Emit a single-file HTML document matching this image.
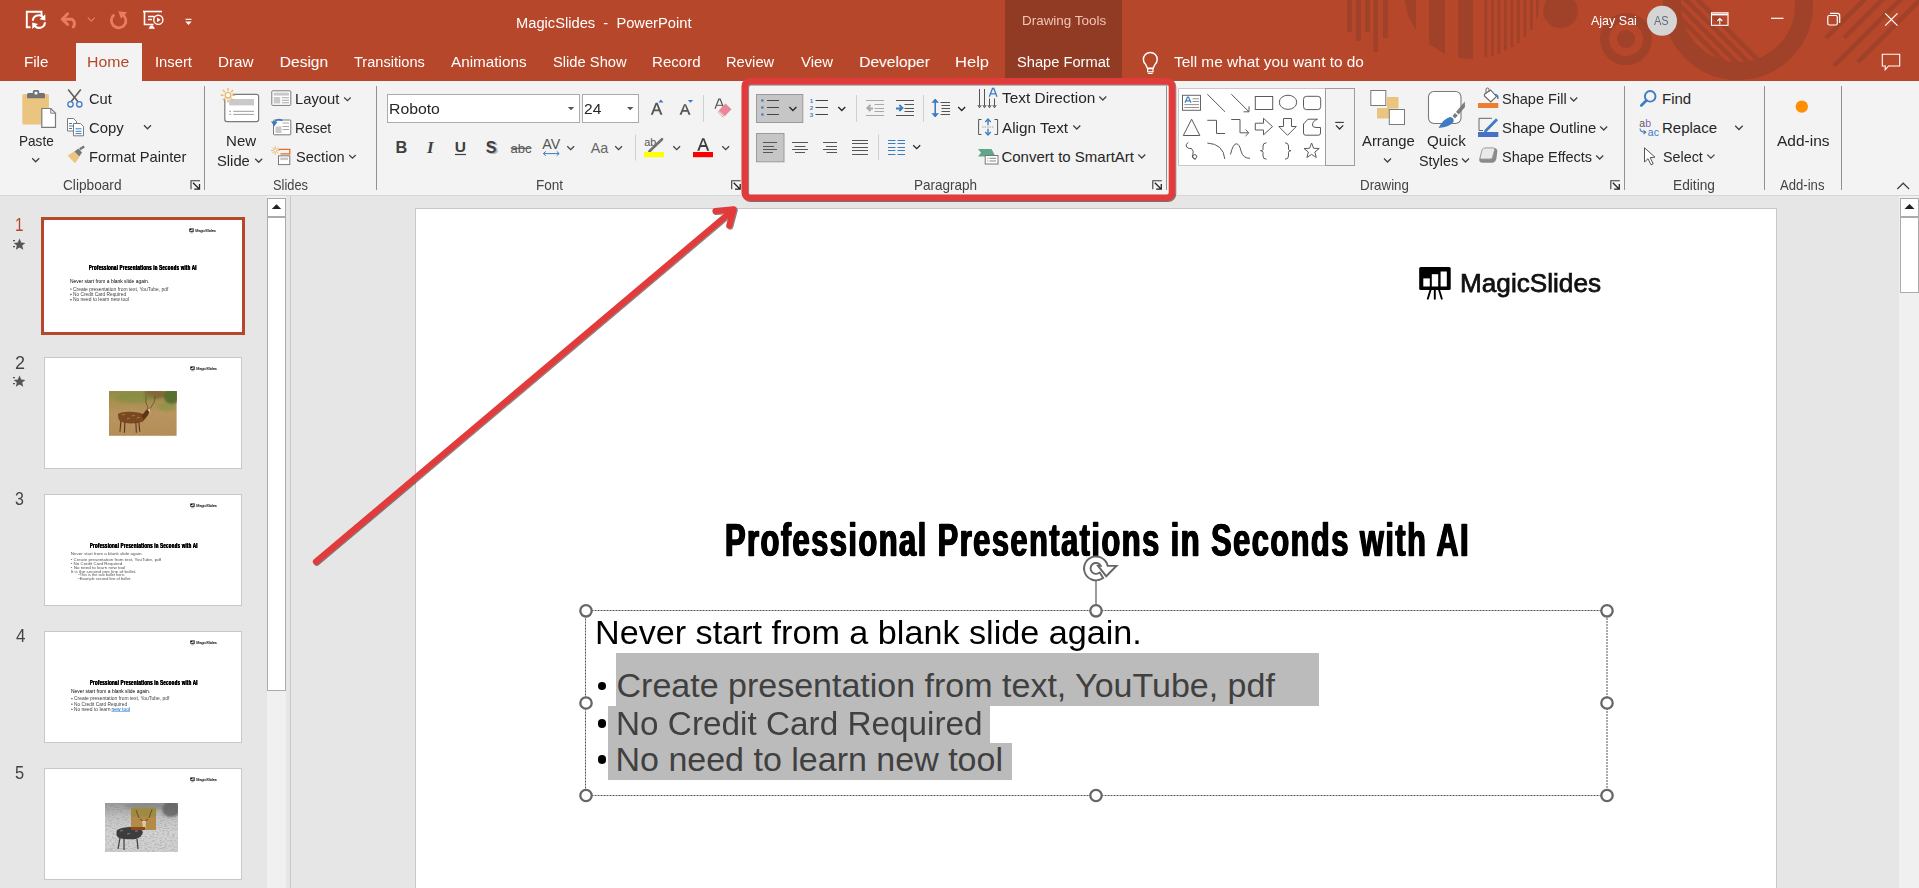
<!DOCTYPE html>
<html><head><meta charset="utf-8"><title>MagicSlides - PowerPoint</title><style>
*{margin:0;padding:0;box-sizing:border-box}
html,body{width:1919px;height:888px;overflow:hidden;background:#E6E6E6}
body{position:relative;font-family:"Liberation Sans",sans-serif}
.t{position:absolute;white-space:pre;line-height:1;transform-origin:0 0}
.a{position:absolute}
svg{position:absolute;overflow:visible}
</style></head><body>
<div class="a" style="left:0;top:0;width:1919px;height:81px;background:#B7472A"></div>
<svg style="left:0;top:0" width="1919" height="81" viewBox="0 0 1919 81"><clipPath id="tb"><rect x="0" y="0" width="1919" height="81"/></clipPath><g clip-path="url(#tb)"><rect x="1347" y="-1" width="5" height="33" fill="#A0412A"/><rect x="1356" y="-1" width="5" height="42" fill="#A0412A"/><rect x="1365" y="-1" width="5" height="33" fill="#A0412A"/><rect x="1373.5" y="-1" width="4.5" height="53" fill="#A0412A"/><rect x="1383" y="-1" width="5" height="39" fill="#A0412A"/><path d="M1405 0 Q1407 18 1416 30 L1416 0 Z" fill="#A0412A"/><path d="M1429 0 L1445 0 L1445 54 L1429 44 Z" fill="#A0412A"/><path d="M1458 0 L1473 0 L1473 59 L1458 58 Z" fill="#A0412A"/><rect x="1484.5" y="-1" width="2.7" height="58" fill="#A0412A"/><rect x="1491" y="-1" width="2.7" height="57" fill="#A0412A"/><rect x="1497.5" y="-1" width="2.7" height="55" fill="#A0412A"/><rect x="1504" y="-1" width="2.7" height="52" fill="#A0412A"/><rect x="1510.5" y="-1" width="2.7" height="48" fill="#A0412A"/><rect x="1517" y="-1" width="2.7" height="44" fill="#A0412A"/><rect x="1523.5" y="-1" width="2.7" height="38" fill="#A0412A"/><rect x="1530" y="-1" width="2.7" height="31" fill="#A0412A"/><path d="M1536 0 L1538.5 0 L1538.5 14 L1536 20 Z" fill="#A0412A"/><circle cx="1560.5" cy="10.8" r="17.3" fill="#A0412A"/><circle cx="1626" cy="39" r="21.5" fill="none" stroke="#A0412A" stroke-width="9"/><circle cx="1626" cy="39" r="9" fill="#A0412A"/><circle cx="1738" cy="5" r="66" fill="none" stroke="#A0412A" stroke-width="18"/><clipPath id="cr"><circle cx="1738" cy="5" r="60"/></clipPath><g clip-path="url(#cr)"><line x1="1642" y1="-20" x2="1742" y2="80" stroke="#A0412A" stroke-width="4.5"/><line x1="1654" y1="-20" x2="1754" y2="80" stroke="#A0412A" stroke-width="4.5"/><line x1="1666" y1="-20" x2="1766" y2="80" stroke="#A0412A" stroke-width="4.5"/><line x1="1678" y1="-20" x2="1778" y2="80" stroke="#A0412A" stroke-width="4.5"/></g><line x1="1826" y1="38" x2="1880" y2="-16" stroke="#A0412A" stroke-width="4.5"/><line x1="1844" y1="38" x2="1898" y2="-16" stroke="#A0412A" stroke-width="4.5"/><line x1="1834" y1="66" x2="1920" y2="-20" stroke="#A0412A" stroke-width="4.5"/><line x1="1858" y1="62" x2="1940" y2="-20" stroke="#A0412A" stroke-width="4.5"/></g></svg>
<div class="a" style="left:1005px;top:0;width:117px;height:81px;background:#923B24"></div>
<div class="t" style="left:1022.22px;top:14.2px;font-size:13px;color:#F1C6B9;transform:scaleX(1.0340)">Drawing Tools</div>
<svg style="left:0;top:0" width="220" height="40" viewBox="0 0 220 40"><path d="M30.5 27.2 H26.8 V11.8 H41.5 V16.5" fill="none" stroke="#FFFFFF" stroke-width="1.9"/><path d="M32.8 20.8 A5.8 5.8 0 0 1 43.6 18.2" fill="none" stroke="#FFFFFF" stroke-width="2.1"/><path d="M45.3 14.3 L45.4 20.6 L39.6 19.2 Z" fill="#FFFFFF"/><path d="M44.9 22.2 A5.8 5.8 0 0 1 34 24.8" fill="none" stroke="#FFFFFF" stroke-width="2.1"/><path d="M32.3 28.9 L32.2 22.4 L38 24 Z" fill="#FFFFFF"/><path d="M63.5 19.3 H72 A5 5 0 0 1 73.2 27" fill="none" stroke="#EC7B62" stroke-width="2.9" stroke-linecap="round"/><path d="M67.6 13.8 L62.2 19.3 L67.6 24.4" fill="none" stroke="#EC7B62" stroke-width="2.9" stroke-linecap="round" stroke-linejoin="round"/><path d="M87.8 17.6 L91.3 21.1 L94.8 17.6" fill="none" stroke="#EC7B62" stroke-width="1.2"/><path d="M114.3 14.6 A7.3 7.3 0 1 0 122.3 14.2" fill="none" stroke="#EC7B62" stroke-width="2.8"/><path d="M118.3 11.2 L127 12.3 L121 18.8 Z" fill="#EC7B62"/><path d="M143 11.5 H162" stroke="#FFFFFF" stroke-width="1.6"/><path d="M144.5 12 V24.5 H153.5" fill="none" stroke="#FFFFFF" stroke-width="1.6"/><path d="M148 16.5 H154 M148 19.5 H152" stroke="#FFFFFF" stroke-width="1.4"/><circle cx="158.3" cy="19.8" r="4.6" fill="none" stroke="#FFFFFF" stroke-width="1.4"/><path d="M157 17.5 V22.2 L160.6 19.8 Z" fill="#FFFFFF"/><path d="M148.5 28.8 H155 L152.8 25.5 H150.5 Z" fill="#FFFFFF"/><path d="M185.5 19.3 H191.5" stroke="#FFFFFF" stroke-width="1.1"/><path d="M185.3 21.6 H191.7 L188.5 25 Z" fill="#FFFFFF"/></svg>
<div class="t" style="left:516.02px;top:15.25px;font-size:15.3px;color:#FFFFFF;transform:scaleX(0.9600)">MagicSlides  -  PowerPoint</div>
<div class="a" style="left:76px;top:43px;width:66px;height:38px;background:#F3F3F3"></div>
<div class="t" style="left:24.19px;top:54.48px;font-size:15.5px;color:#FFFFFF;transform:scaleX(0.9775)">File</div>
<div class="t" style="left:154.77px;top:54.48px;font-size:15.5px;color:#FFFFFF;transform:scaleX(0.9523)">Insert</div>
<div class="t" style="left:218.28px;top:54.48px;font-size:15.5px;color:#FFFFFF;transform:scaleX(0.9842)">Draw</div>
<div class="t" style="left:279.86px;top:54.48px;font-size:15.5px;color:#FFFFFF">Design</div>
<div class="t" style="left:353.91px;top:54.48px;font-size:15.5px;color:#FFFFFF;transform:scaleX(0.9409)">Transitions</div>
<div class="t" style="left:451.2px;top:54.48px;font-size:15.5px;color:#FFFFFF;transform:scaleX(0.9855)">Animations</div>
<div class="t" style="left:552.84px;top:54.48px;font-size:15.5px;color:#FFFFFF;transform:scaleX(0.9495)">Slide Show</div>
<div class="t" style="left:652.29px;top:54.48px;font-size:15.5px;color:#FFFFFF;transform:scaleX(0.9740)">Record</div>
<div class="t" style="left:726.12px;top:54.48px;font-size:15.5px;color:#FFFFFF;transform:scaleX(0.9476)">Review</div>
<div class="t" style="left:801.23px;top:54.48px;font-size:15.5px;color:#FFFFFF;transform:scaleX(0.9625)">View</div>
<div class="t" style="left:859.26px;top:54.48px;font-size:15.5px;color:#FFFFFF">Developer</div>
<div class="t" style="left:954.98px;top:54.48px;font-size:15.5px;color:#FFFFFF;transform:scaleX(1.0669)">Help</div>
<div class="t" style="left:1016.54px;top:54.48px;font-size:15.5px;color:#FFFFFF;transform:scaleX(0.9464)">Shape Format</div>
<div class="t" style="left:1173.89px;top:54.48px;font-size:15.5px;color:#FFFFFF;transform:scaleX(0.9930)">Tell me what you want to do</div>
<div class="t" style="left:87.33px;top:54.48px;font-size:15.5px;color:#B7472A;transform:scaleX(1.0211)">Home</div>
<svg style="left:0;top:40px" width="1919" height="41" viewBox="0 40 1919 41"><g transform="translate(0 1.6)"><path d="M1147.4 66.6 L1145.7 62.9 A6.9 6.9 0 1 1 1154.9 62.9 L1153.2 66.6 Z" fill="none" stroke="#fff" stroke-width="1.45" stroke-linejoin="round"/><rect x="1147.6" y="67.2" width="5.4" height="3" fill="none" stroke="#fff" stroke-width="1.2"/><path d="M1148.4 71.9 H1152.2" stroke="#fff" stroke-width="1.2" stroke-linecap="round"/></g></svg>
<div class="t" style="left:1590.8px;top:14.37px;font-size:13.5px;color:#FFFFFF;transform:scaleX(0.9259)">Ajay Sai</div>
<svg style="left:1640px;top:0" width="279" height="81" viewBox="1640 0 279 81"><circle cx="1662" cy="20.8" r="15" fill="#D5D5D5"/></svg>
<div class="t" style="left:1654.3px;top:14.37px;font-size:13.5px;color:#5E6C80;transform:scaleX(0.8186)">AS</div>
<svg style="left:1700px;top:0" width="219" height="81" viewBox="1700 0 219 81"><rect x="1711.5" y="12.8" width="16.5" height="12.5" fill="none" stroke="#fff" stroke-width="1.1"/><path d="M1711.5 14.5 H1728" stroke="#fff" stroke-width="1.8"/><path d="M1719.8 24.5 V18.5 M1717.3 21 L1719.8 18.5 L1722.3 21" fill="none" stroke="#fff" stroke-width="1.1"/><path d="M1771 18.3 H1783.5" stroke="#fff" stroke-width="1.2"/><rect x="1827.8" y="15.5" width="9.5" height="9.5" rx="1.5" fill="none" stroke="#fff" stroke-width="1.2"/><path d="M1830 13.4 H1837.5 A2 2 0 0 1 1839.7 15.6 V23" fill="none" stroke="#fff" stroke-width="1.2"/><path d="M1885.2 13.3 L1897.5 25.6 M1897.5 13.3 L1885.2 25.6" stroke="#fff" stroke-width="1.2"/><path d="M1882.3 54.3 H1899.7 V66 H1888.5 L1885.2 69.8 V66 H1882.3 Z" fill="none" stroke="#fff" stroke-width="1.1" stroke-linejoin="miter"/></svg>
<div class="a" style="left:0;top:81px;width:1919px;height:115px;background:#F3F3F3;border-bottom:1px solid #D6D6D6"></div>
<div class="a" style="left:204px;top:86px;width:1px;height:104px;background:#919191"></div>
<div class="a" style="left:376px;top:86px;width:1px;height:104px;background:#919191"></div>
<div class="a" style="left:1166px;top:86px;width:1px;height:104px;background:#919191"></div>
<div class="a" style="left:1624px;top:86px;width:1px;height:104px;background:#919191"></div>
<div class="a" style="left:1764px;top:86px;width:1px;height:104px;background:#919191"></div>
<div class="a" style="left:1841px;top:86px;width:1px;height:104px;background:#919191"></div>
<div class="t" style="left:62.92px;top:177.58px;font-size:14.2px;color:#444444;transform:scaleX(0.9638)">Clipboard</div>
<div class="t" style="left:272.72px;top:177.58px;font-size:14.2px;color:#444444;transform:scaleX(0.9052)">Slides</div>
<div class="t" style="left:536.11px;top:177.58px;font-size:14.2px;color:#444444;transform:scaleX(0.9561)">Font</div>
<div class="t" style="left:914.12px;top:177.58px;font-size:14.2px;color:#444444;transform:scaleX(0.9525)">Paragraph</div>
<div class="t" style="left:1360.23px;top:177.58px;font-size:14.2px;color:#444444;transform:scaleX(0.9403)">Drawing</div>
<div class="t" style="left:1673.1px;top:177.58px;font-size:14.2px;color:#444444;transform:scaleX(0.9680)">Editing</div>
<div class="t" style="left:1780.4px;top:177.58px;font-size:14.2px;color:#444444;transform:scaleX(0.9236)">Add-ins</div>
<div class="t" style="left:18.61px;top:133.3px;font-size:15px;color:#262626;transform:scaleX(0.9053)">Paste</div>
<div class="t" style="left:89.47px;top:90.6px;font-size:15px;color:#262626;transform:scaleX(0.9778)">Cut</div>
<div class="t" style="left:89.46px;top:120.1px;font-size:15px;color:#262626;transform:scaleX(0.9920)">Copy</div>
<div class="t" style="left:89.02px;top:149.1px;font-size:15px;color:#262626;transform:scaleX(0.9823)">Format Painter</div>
<div class="t" style="left:225.99px;top:133.3px;font-size:15px;color:#262626;transform:scaleX(1.0043)">New</div>
<div class="t" style="left:216.94px;top:152.9px;font-size:15px;color:#262626;transform:scaleX(0.9836)">Slide</div>
<div class="t" style="left:295.02px;top:90.6px;font-size:15px;color:#262626;transform:scaleX(0.9834)">Layout</div>
<div class="t" style="left:295.09px;top:120.1px;font-size:15px;color:#262626;transform:scaleX(0.9241)">Reset</div>
<div class="t" style="left:295.54px;top:149.1px;font-size:15px;color:#262626;transform:scaleX(0.9716)">Section</div>
<div class="a" style="left:387px;top:94px;width:193px;height:29px;background:#fff;border:1px solid #ABABAB"></div>
<div class="a" style="left:582px;top:94px;width:57px;height:29px;background:#fff;border:1px solid #ABABAB"></div>
<div class="t" style="left:389.34px;top:101.1px;font-size:15px;color:#262626;transform:scaleX(1.0521)">Roboto</div>
<div class="t" style="left:584.42px;top:101.1px;font-size:15px;color:#262626;transform:scaleX(1.0356)">24</div>
<div class="t" style="left:1001.89px;top:90.4px;font-size:15px;color:#262626;transform:scaleX(1.0274)">Text Direction</div>
<div class="t" style="left:1002.2px;top:120.1px;font-size:15px;color:#262626;transform:scaleX(1.0209)">Align Text</div>
<div class="t" style="left:1001.45px;top:149.1px;font-size:15px;color:#262626">Convert to SmartArt</div>
<div class="t" style="left:1361.5px;top:133.3px;font-size:15px;color:#262626;transform:scaleX(0.9877)">Arrange</div>
<div class="t" style="left:1426.62px;top:133.3px;font-size:15px;color:#262626;transform:scaleX(1.0093)">Quick</div>
<div class="t" style="left:1418.65px;top:152.9px;font-size:15px;color:#262626;transform:scaleX(0.9578)">Styles</div>
<div class="t" style="left:1501.55px;top:90.6px;font-size:15px;color:#262626;transform:scaleX(0.9689)">Shape Fill</div>
<div class="t" style="left:1501.53px;top:120.1px;font-size:15px;color:#262626;transform:scaleX(0.9928)">Shape Outline</div>
<div class="t" style="left:1501.55px;top:149.1px;font-size:15px;color:#262626;transform:scaleX(0.9679)">Shape Effects</div>
<div class="t" style="left:1662px;top:90.6px;font-size:15px;color:#262626">Find</div>
<div class="t" style="left:1662px;top:120.1px;font-size:15px;color:#262626">Replace</div>
<div class="t" style="left:1662.56px;top:149.1px;font-size:15px;color:#262626;transform:scaleX(0.9541)">Select</div>
<div class="t" style="left:1777.3px;top:133.3px;font-size:15px;color:#262626;transform:scaleX(1.0333)">Add-ins</div>
<svg style="left:0;top:0" width="1919" height="200" viewBox="0 0 1919 200"><rect x="22.3" y="93.9" width="26.6" height="30.7" rx="1.5" fill="#EBC47F"/><path d="M27 98.2 V94.5 Q27 93 28.5 93 H32.8 V91.5 Q32.8 90 34.3 90 H37.7 Q39.2 90 39.2 91.5 V93 H43.5 Q45 93 45 94.5 V98.2 Z" fill="#737373"/><rect x="34.6" y="91.8" width="2.8" height="2.6" fill="#fff"/><path d="M41.8 108.5 H50.8 L55.5 113.2 V127.3 H41.8 Z" fill="#fff" stroke="#7A7A7A" stroke-width="1.2"/><path d="M50.8 108.5 V113.2 H55.5" fill="none" stroke="#7A7A7A" stroke-width="1"/><path d="M32.2 158.3 l3.5 3.5 l3.5 -3.5" fill="none" stroke="#404040" stroke-width="1.3"/><path d="M68.2 89.5 L78 101.8 M80.8 89.5 L71 101.8" stroke="#5F5F5F" stroke-width="1.6"/><circle cx="70.5" cy="104.3" r="2.7" fill="none" stroke="#3E7CC0" stroke-width="1.3"/><circle cx="79.3" cy="104.3" r="2.7" fill="none" stroke="#3E7CC0" stroke-width="1.3"/><path d="M67.5 118.5 H73.5 L76.5 121.5 V131 H67.5 Z" fill="#fff" stroke="#7A7A7A" stroke-width="1"/><path d="M69 123.5 H72 M69 126 H74.5 M69 128.5 H72" stroke="#3E7CC0" stroke-width="1"/><path d="M73.5 123.5 H80.5 L83.5 126.5 V135.8 H73.5 Z" fill="#fff" stroke="#7A7A7A" stroke-width="1"/><path d="M75.5 128.8 H81.5 M75.5 131.3 H81.5 M75.5 133.6 H81.5" stroke="#3E7CC0" stroke-width="1"/><path d="M144 125.3 l3.5 3.5 l3.5 -3.5" fill="none" stroke="#404040" stroke-width="1.25"/><path d="M67.6 155.5 L74.5 151.2 L79.5 157 L75 163.3 Z" fill="#EBC47F"/><path d="M74.5 151.4 L78.5 148.5 L82 152.5 L79.3 156.6 Z" fill="#777"/><path d="M79.8 149.3 L84.2 146.5" stroke="#777" stroke-width="2.4"/><path d="M191 189.2 V180.7 H200" fill="none" stroke="#3A3A3A" stroke-width="1.1"/><path d="M193 182.7 L199.5 189.2 M194.3 189.2 H199.5 V184" fill="none" stroke="#262626" stroke-width="1.3"/><rect x="224.8" y="94.3" width="33.8" height="27.3" rx="2" fill="#fff" stroke="#7A7A7A" stroke-width="1.2"/><rect x="229.2" y="99" width="24.8" height="6.4" fill="#C9C9C9"/><path d="M229.3 111.3 H231 M229.3 114.4 H231 M233.3 111.3 H254 M233.3 114.4 H254" stroke="#9C9C9C" stroke-width="1"/><circle cx="228" cy="95.2" r="4.8" fill="#F3F3F3"/><circle cx="228" cy="95.2" r="2.8" fill="#fff" stroke="#E9B765" stroke-width="1.4"/><path d="M232.5 95.2 L235.2 95.2 M231.18 98.38 L233.09 100.29 M228 99.7 L228 102.4 M224.82 98.38 L222.91 100.29 M223.5 95.2 L220.8 95.2 M224.82 92.02 L222.91 90.11 M228 90.7 L228 88 M231.18 92.02 L233.09 90.11 " stroke="#E9B765" stroke-width="1.4"/><path d="M255.2 158.8 l3.5 3.5 l3.5 -3.5" fill="none" stroke="#404040" stroke-width="1.3"/><rect x="271.8" y="90.8" width="19" height="14.6" rx="0.8" fill="#fff" stroke="#7A7A7A" stroke-width="1"/><rect x="273.7" y="92.6" width="15.2" height="3" fill="#C9C9C9"/><rect x="273.7" y="97" width="6.5" height="6.5" fill="#C9C9C9"/><path d="M281.8 97.8 H289 M281.8 100.3 H289 M281.8 102.8 H289" stroke="#9C9C9C" stroke-width="0.9"/><path d="M344.2 97.5 l3.25 3.25 l3.25 -3.25" fill="none" stroke="#404040" stroke-width="1.2"/><rect x="273.5" y="120" width="17.3" height="14.8" rx="0.8" fill="#fff" stroke="#7A7A7A" stroke-width="1"/><rect x="275.5" y="126.5" width="6" height="6.5" fill="#C9C9C9"/><path d="M282.5 123 H289 M282.5 126.5 H289 M282.5 129.5 H289" stroke="#9C9C9C" stroke-width="0.9"/><path d="M273.8 124.5 Q275.5 117.5 282.5 120.5" fill="none" stroke="#3E7CC0" stroke-width="1.8"/><path d="M271 121.2 L274.2 126.5 L277.5 122 Z" fill="#3E7CC0"/><circle cx="275.2" cy="150.5" r="1.6" fill="#fff" stroke="#E9B765" stroke-width="1"/><path d="M277.5 150.5 L279.5 150.5 M276.83 152.13 L278.24 153.54 M275.2 152.8 L275.2 154.8 M273.57 152.13 L272.16 153.54 M272.9 150.5 L270.9 150.5 M273.57 148.87 L272.16 147.46 M275.2 148.2 L275.2 146.2 M276.83 148.87 L278.24 147.46 " stroke="#E9B765" stroke-width="1"/><path d="M278.5 149.3 H289.8 V153.8 H280.5" fill="none" stroke="#E07027" stroke-width="1.3"/><rect x="278.5" y="155.8" width="11.3" height="8.8" fill="#fff" stroke="#7A7A7A" stroke-width="1"/><rect x="280.3" y="157.5" width="7.8" height="2.6" fill="#C9C9C9"/><path d="M349.2 155 l3.25 3.25 l3.25 -3.25" fill="none" stroke="#404040" stroke-width="1.2"/><path d="M567.8 107 h6.4 l-3.2 3.2 Z" fill="#555"/><path d="M627 107 h6.4 l-3.2 3.2 Z" fill="#555"/><path d="M650.8 114.8 L655.6 102.8 H657.6 L662.5 114.8 H660.3 L659 111.3 H654.2 L652.9 114.8 Z M654.9 109.5 H658.3 L656.6 104.8 Z" fill="#555" fill-rule="evenodd"/><path d="M658.3 102.4 L660.9 99.6 L663.5 102.4 Z" fill="#3E7CC0"/><path d="M679.5 114.8 L684 104.3 H686 L690.6 114.8 H688.5 L687.4 111.8 H682.7 L681.6 114.8 Z M683.4 110.1 H686.7 L685 105.6 Z" fill="#555" fill-rule="evenodd"/><path d="M687.8 100 H693.2 L690.5 102.8 Z" fill="#3E7CC0"/><path d="M715 108.8 L718.8 99.2 H720.2 L724 108.8" fill="none" stroke="#555" stroke-width="1.2"/><path d="M716.7 105.3 H722.3" stroke="#555" stroke-width="1"/><path d="M725.5 103.5 L731.5 109.3 L725 116 L719 110.3 Z" fill="#E8879A"/><path d="M719 110.3 L717.5 112 L721.5 115.8 L723 117.7 L725 116 Z" fill="#E8879A" opacity="0.85"/><path d="M718.6 111.5 L724 116.8" stroke="#fff" stroke-width="0.9"/><text x="395.4" y="152.8" font-family="Liberation Sans" font-weight="700" font-size="16.3" fill="#404040">B</text><text x="427" y="152.8" font-family="Liberation Serif" font-style="italic" font-weight="700" font-size="17" fill="#404040">I</text><text x="454.8" y="152.2" font-family="Liberation Sans" font-weight="700" font-size="15.5" fill="#404040">U</text><path d="M455 154.5 H466" stroke="#404040" stroke-width="1.2"/><text x="487.5" y="154" font-family="Liberation Sans" font-weight="700" font-size="16" fill="#B0B0B0">S</text><text x="485.8" y="152.5" font-family="Liberation Sans" font-weight="700" font-size="16" fill="#404040">S</text><text x="510.5" y="152.5" font-family="Liberation Sans" font-size="12.5" fill="#555" textLength="21" lengthAdjust="spacingAndGlyphs">abc</text><path d="M510.8 148.3 H531.5" stroke="#555" stroke-width="1.1"/><text x="542.2" y="149" font-family="Liberation Sans" font-size="14" fill="#555" textLength="18" lengthAdjust="spacingAndGlyphs">AV</text><path d="M543.5 153.6 H559" stroke="#3E7CC0" stroke-width="1"/><path d="M545.8 151.4 L543.3 153.6 L545.8 155.8 M556.7 151.4 L559.2 153.6 L556.7 155.8" fill="none" stroke="#3E7CC0" stroke-width="1"/><path d="M567.3 146.3 l3.4 3.4 l3.4 -3.4" fill="none" stroke="#404040" stroke-width="1.25"/><text x="590.8" y="152.5" font-family="Liberation Sans" font-size="14.8" fill="#666" textLength="17.5" lengthAdjust="spacingAndGlyphs">Aa</text><path d="M615.2 146.3 l3.4 3.4 l3.4 -3.4" fill="none" stroke="#404040" stroke-width="1.25"/><path d="M635.5 134.5 V160.5" stroke="#D0D0D0" stroke-width="1"/><path d="M703.5 95 V122" stroke="#D0D0D0" stroke-width="1"/><text x="644.3" y="145.5" font-family="Liberation Sans" font-size="10" fill="#555" textLength="12" lengthAdjust="spacingAndGlyphs">ab</text><path d="M649.5 151.2 L662 139.2" stroke="#707070" stroke-width="2.6" stroke-linecap="round"/><path d="M648 152 L649.5 149.6 L651.5 151.4 Z" fill="#707070"/><rect x="644" y="152" width="20" height="5.2" fill="#FFFF00"/><path d="M673.3 146.3 l3.4 3.4 l3.4 -3.4" fill="none" stroke="#404040" stroke-width="1.25"/><path d="M697.2 150.8 L702.2 138.3 H704.3 L709.3 150.8 H707.1 L705.8 147.1 H700.7 L699.4 150.8 Z M701.3 145.1 H705.1 L703.2 139.9 Z" fill="#404040" fill-rule="evenodd"/><rect x="693" y="152" width="20" height="5.2" fill="#FF0000"/><path d="M722.3 146.3 l3.4 3.4 l3.4 -3.4" fill="none" stroke="#404040" stroke-width="1.25"/><path d="M731.7 189.2 V180.7 H740.7" fill="none" stroke="#3A3A3A" stroke-width="1.1"/><path d="M733.7 182.7 L740.2 189.2 M735 189.2 H740.2 V184" fill="none" stroke="#262626" stroke-width="1.3"/><rect x="756.5" y="94.5" width="46.3" height="28" fill="#C6C6C6" stroke="#9B9B9B" stroke-width="1"/><circle cx="762.4" cy="100.5" r="1.35" fill="#4A7FC0"/><path d="M767 100.5 H779" stroke="#444" stroke-width="1"/><circle cx="762.4" cy="107.5" r="1.35" fill="#4A7FC0"/><path d="M767 107.5 H779" stroke="#444" stroke-width="1"/><circle cx="762.4" cy="114.5" r="1.35" fill="#4A7FC0"/><path d="M767 114.5 H779" stroke="#444" stroke-width="1"/><path d="M789.4 107 l3.5 3.5 l3.5 -3.5" fill="none" stroke="#262626" stroke-width="1.3"/><text x="809.8" y="102.8" font-family="Liberation Sans" font-weight="700" font-size="6.2" fill="#4A7FC0">1</text><path d="M815.5 100.5 H828" stroke="#444" stroke-width="1"/><text x="809.8" y="109.8" font-family="Liberation Sans" font-weight="700" font-size="6.2" fill="#4A7FC0">2</text><path d="M815.5 107.5 H828" stroke="#444" stroke-width="1"/><text x="809.8" y="116.8" font-family="Liberation Sans" font-weight="700" font-size="6.2" fill="#4A7FC0">3</text><path d="M815.5 114.5 H828" stroke="#444" stroke-width="1"/><path d="M838.3 107 l3.5 3.5 l3.5 -3.5" fill="none" stroke="#262626" stroke-width="1.3"/><path d="M856.5 95 V122" stroke="#D0D0D0" stroke-width="1"/><path d="M866 100.5 H884 M874.5 104.5 H884 M874.5 108.5 H884 M874.5 111.5 H884 M866 115.5 H884" stroke="#A8A8A8" stroke-width="1"/><path d="M873 108.5 H867.5 M870.5 105 L867.3 108 L870.5 111" fill="none" stroke="#A8A8A8" stroke-width="1.8"/><path d="M896 100.5 H914 M904.5 104.5 H914 M904.5 108.5 H914 M904.5 111.5 H914 M896 115.5 H914" stroke="#555" stroke-width="1"/><path d="M896 108.5 H902.3 M899.3 105 L902.5 108 L899.3 111" fill="none" stroke="#3E7CC0" stroke-width="1.8"/><path d="M923.5 95 V122" stroke="#D0D0D0" stroke-width="1"/><path d="M935.2 100.5 V115.5" stroke="#3E7CC0" stroke-width="1.6"/><path d="M932 102.8 L935.2 99 L938.4 102.8 M932 113.2 L935.2 117 L938.4 113.2" fill="#3E7CC0" stroke="#3E7CC0" stroke-width="1"/><path d="M940.5 102.5 H950 M941.5 105.5 H950 M941.5 108.5 H950 M941.5 111.5 H950 M940.5 114.5 H950" stroke="#555" stroke-width="1"/><path d="M958.2 107 l3.5 3.5 l3.5 -3.5" fill="none" stroke="#262626" stroke-width="1.3"/><rect x="756.5" y="133.5" width="27.5" height="28.3" fill="#C6C6C6" stroke="#9B9B9B" stroke-width="1"/><path d="M763 142.5 H777 M763 146.5 H774 M763 149.5 H777 M763 152.5 H773" stroke="#555" stroke-width="1"/><path d="M792 142.5 H808 M794.5 146.5 H805.5 M792 149.5 H808 M795 152.5 H805" stroke="#555" stroke-width="1"/><path d="M823 142.5 H837 M826 146.5 H837 M823 149.5 H837 M826.5 152.5 H837" stroke="#555" stroke-width="1"/><path d="M852 140.5 H868 M852 143.5 H868 M852 147.5 H868 M852 150.5 H868 M852 154.5 H868" stroke="#555" stroke-width="1"/><path d="M878.5 134.5 V160" stroke="#D0D0D0" stroke-width="1"/><path d="M888 140.5 H895.5 M888 143.5 H895.5 M888 147.5 H895.5 M888 150.5 H895.5 M888 154.5 H895.5 M897.5 140.5 H905 M897.5 143.5 H905 M897.5 147.5 H905 M897.5 150.5 H905 M897.5 154.5 H905" stroke="#3E7CC0" stroke-width="1"/><path d="M913.2 145.2 l3.5 3.5 l3.5 -3.5" fill="none" stroke="#262626" stroke-width="1.3"/><path d="M979.5 89 V106.5 M984.5 89 V106.5 M989.5 98.5 V106.5 M994.5 98.5 V106.5" stroke="#555" stroke-width="1"/><path d="M977.8 105 L979.5 107.8 L981.2 105 M982.8 105 L984.5 107.8 L986.2 105 M987.8 105 L989.5 107.8 L991.2 105 M992.8 105 L994.5 107.8 L996.2 105" fill="none" stroke="#555" stroke-width="1"/><path d="M989.3 96.8 L992.5 88.5 H993.8 L997 96.8 M990.6 93.8 H995.7" fill="none" stroke="#3E7CC0" stroke-width="1.3"/><path d="M1099.3 96.5 l3.5 3.5 l3.5 -3.5" fill="none" stroke="#404040" stroke-width="1.25"/><path d="M981.5 119.5 H978.6 V134.5 H981.5 M994.5 119.5 H997.6 V134.5 H994.5" fill="none" stroke="#555" stroke-width="1"/><path d="M982 127 H994" stroke="#999" stroke-width="0.9" stroke-dasharray="1.5 1"/><path d="M988 119.5 V125.3 M988 128.7 V134.5" stroke="#3E7CC0" stroke-width="1.4"/><path d="M985.3 122 L988 119 L990.7 122 M985.3 132 L988 135 L990.7 132" fill="none" stroke="#3E7CC0" stroke-width="1.4"/><path d="M1073.3 125.5 l3.5 3.5 l3.5 -3.5" fill="none" stroke="#404040" stroke-width="1.25"/><path d="M978 149 H991.5 L995.5 156.5 H978 L981 152.7 Z" fill="#5FA68A"/><rect x="985.2" y="155.5" width="12.8" height="8.5" fill="#fff" stroke="#777" stroke-width="1"/><path d="M987.3 158.3 H988.3 M989.5 158.3 H996 M987.3 161 H988.3 M989.5 161 H996" stroke="#777" stroke-width="0.9"/><path d="M1138.3 154.5 l3.5 3.5 l3.5 -3.5" fill="none" stroke="#404040" stroke-width="1.25"/><path d="M1152.8 189.2 V180.7 H1161.8" fill="none" stroke="#3A3A3A" stroke-width="1.1"/><path d="M1154.8 182.7 L1161.3 189.2 M1156.1 189.2 H1161.3 V184" fill="none" stroke="#262626" stroke-width="1.3"/><rect x="1178.5" y="88.5" width="176" height="77" fill="#fff" stroke="#C9C9C9" stroke-width="1"/><rect x="1325.5" y="88.5" width="29" height="77" fill="#F3F3F3" stroke="#9E9E9E" stroke-width="1"/><path d="M1335.2 122.4 H1343.8" stroke="#333" stroke-width="1.1"/><path d="M1336 125.4 l3.6 3.6 l3.6 -3.6" fill="none" stroke="#333" stroke-width="1.3"/><rect x="1182.5" y="95.3" width="18" height="15" fill="#fff" stroke="#666" stroke-width="1"/><path d="M1185 102.8 L1187.5 97 H1188.5 L1191 102.8 M1186 100.8 H1190" fill="none" stroke="#3E7CC0" stroke-width="1.2"/><path d="M1192.5 98.8 H1199 M1192.5 101.5 H1199 M1184.3 104.6 H1199 M1184.3 107.5 H1199" stroke="#888" stroke-width="0.9"/><path d="M1207.3 94.2 L1225 111.8" fill="none" stroke="#5A5A5A" stroke-width="1"/><path d="M1231.3 94.2 L1249 111.8 M1249 106.3 V111.8 H1243.5" fill="none" stroke="#5A5A5A" stroke-width="1"/><rect x="1255.3" y="96.5" width="17.4" height="13" fill="none" stroke="#5A5A5A" stroke-width="1"/><ellipse cx="1288" cy="102.3" rx="8.7" ry="7.1" fill="none" stroke="#5A5A5A" stroke-width="1"/><rect x="1303.5" y="96.3" width="17.2" height="13.3" rx="3" fill="none" stroke="#5A5A5A" stroke-width="1"/><path d="M1183.3 135.5 L1191.6 119.2 L1199.8 135.5 Z" fill="none" stroke="#5A5A5A" stroke-width="1"/><path d="M1207.3 120.3 H1216.5 V133.5 H1225" fill="none" stroke="#5A5A5A" stroke-width="1"/><path d="M1231.2 119.5 H1240 V132.8 H1248.5 M1245.5 129.6 L1248.8 132.8 L1245.5 136" fill="none" stroke="#5A5A5A" stroke-width="1"/><path d="M1255.3 123.2 H1263.5 V118.3 L1272.5 126.6 L1263.5 134.8 V130 H1255.3 Z" fill="none" stroke="#5A5A5A" stroke-width="1"/><path d="M1283.5 118.5 H1291.5 V126.5 H1296.3 L1287.5 135.3 L1278.8 126.5 H1283.5 Z" fill="none" stroke="#5A5A5A" stroke-width="1"/><path d="M1303.5 124 L1308 119.2 H1317.5 Q1312.5 121 1312.5 125 Q1312.5 127.5 1316 127.5 H1320.5 V133 Q1320.5 135.2 1318.5 135.2 H1305.5 Q1303.5 135.2 1303.5 133 Z" fill="none" stroke="#5A5A5A" stroke-width="1"/><path d="M1188.2 142.3 Q1185 145 1186.5 147 Q1188.5 149 1191.5 148.5 Q1194 151 1193 154 Q1191.5 156 1193 158 Q1195 159.5 1196.5 157.8 Q1198 155.5 1195 154.5 Q1193 154.5 1192.5 157 L1195.5 160" fill="none" stroke="#5A5A5A" stroke-width="1"/><path d="M1207.3 143 Q1223.5 144 1224.8 159" fill="none" stroke="#5A5A5A" stroke-width="1"/><path d="M1230.5 154.5 Q1233 143.5 1236.5 143.8 Q1239.5 144 1241 151 Q1243 158.5 1250 158.3" fill="none" stroke="#5A5A5A" stroke-width="1"/><path d="M1266.5 142.8 Q1263 142.8 1263 146 V149.3 Q1263 150.7 1260.5 150.7 Q1263 150.7 1263 152.3 V156 Q1263 159.2 1266.5 159.2" fill="none" stroke="#5A5A5A" stroke-width="1"/><path d="M1285 142.8 Q1288.5 142.8 1288.5 146 V149.3 Q1288.5 150.7 1291 150.7 Q1288.5 150.7 1288.5 152.3 V156 Q1288.5 159.2 1285 159.2" fill="none" stroke="#5A5A5A" stroke-width="1"/><polygon points="1311.6,143 1313.6,148.25 1319.21,148.53 1314.83,152.05 1316.3,157.47 1311.6,154.4 1306.9,157.47 1308.37,152.05 1303.99,148.53 1309.6,148.25" fill="none" stroke="#5A5A5A" stroke-width="1"/><rect x="1387" y="97" width="11.5" height="11.5" fill="#EBC47F"/><rect x="1377" y="108" width="12.5" height="10.5" fill="#EBC47F"/><rect x="1370.8" y="90.5" width="15" height="15" fill="#fff" stroke="#7A7A7A" stroke-width="1"/><rect x="1389.3" y="109.5" width="15.2" height="15" fill="#fff" stroke="#7A7A7A" stroke-width="1"/><path d="M1384 158.5 l3.5 3.5 l3.5 -3.5" fill="none" stroke="#404040" stroke-width="1.3"/><rect x="1428.5" y="91.5" width="32.5" height="32" rx="5.5" fill="#fff" stroke="#7A7A7A" stroke-width="1.1"/><path d="M1464.8 101.5 L1456 112 L1458.8 114.5 L1465 107 Z" fill="#7B7B7B"/><path d="M1455 113 L1452.5 116 L1455 118.5 L1457.8 115.5 Z" fill="#7B7B7B"/><path d="M1438.5 128 Q1443 119 1450 117 Q1454.5 117.5 1453.5 122 Q1450 127 1438.5 128 Z" fill="#3E7CC0"/><path d="M1462 158.5 l3.5 3.5 l3.5 -3.5" fill="none" stroke="#404040" stroke-width="1.3"/><path d="M1484.5 94.2 L1490.5 90 L1496.5 96.5 L1490.8 102 L1484.5 96 Z" fill="#fff" stroke="#666" stroke-width="1.1"/><path d="M1486 93.5 V89.5 Q1486 88 1487.5 88 Q1489 88 1489 89.5 V92" fill="none" stroke="#666" stroke-width="1"/><path d="M1495 94.5 Q1498.5 95 1497.8 99" fill="none" stroke="#3E7CC0" stroke-width="1.5"/><rect x="1478" y="103" width="20.3" height="5" fill="#ED7D31"/><path d="M1570.2 97.5 l3.5 3.5 l3.5 -3.5" fill="none" stroke="#404040" stroke-width="1.25"/><path d="M1492 118.3 H1479 V130.5 H1483" fill="none" stroke="#666" stroke-width="1"/><path d="M1484.5 130 L1496 118.3 L1498 120.3 L1486.5 132 L1484 132.5 Z" fill="#3E7CC0"/><rect x="1478" y="132" width="20.3" height="5" fill="#4472C4"/><path d="M1600.2 126.5 l3.5 3.5 l3.5 -3.5" fill="none" stroke="#404040" stroke-width="1.25"/><path d="M1482 149.5 Q1483 147.8 1485 147.8 H1494 Q1497.5 148.3 1497.3 151.5 L1496.5 158 Q1496 162 1492.5 162.8 H1482.5 Q1479 162.5 1479.2 159.5 Z" fill="#8A8A8A"/><path d="M1482.2 149.3 Q1483 148 1485 148 H1493.5 Q1495 148.3 1494.5 150 L1492.5 157.3 Q1492 159 1490 159 H1481.3 Q1479.8 158.8 1480.2 157.3 Z" fill="#E9E9E9" stroke="#9A9A9A" stroke-width="0.8"/><path d="M1596.2 155.5 l3.5 3.5 l3.5 -3.5" fill="none" stroke="#404040" stroke-width="1.25"/><path d="M1610.8 189.2 V180.7 H1619.8" fill="none" stroke="#3A3A3A" stroke-width="1.1"/><path d="M1612.8 182.7 L1619.3 189.2 M1614.1 189.2 H1619.3 V184" fill="none" stroke="#262626" stroke-width="1.3"/><circle cx="1650.2" cy="96.3" r="5.3" fill="none" stroke="#3E7CC0" stroke-width="1.9"/><path d="M1646.3 100.5 L1641.3 105.5" stroke="#3E7CC0" stroke-width="2.6" stroke-linecap="round"/><text x="1639.3" y="127.3" font-family="Liberation Sans" font-size="10.5" fill="#555">a</text><text x="1645.2" y="127.3" font-family="Liberation Sans" font-size="10.5" fill="#8E5BB0">b</text><text x="1647.8" y="135.6" font-family="Liberation Sans" font-size="10.5" fill="#3E7CC0">ac</text><path d="M1640 128.5 Q1640 132.2 1645.5 132.2 M1643.5 130.3 L1645.8 132.2 L1643.5 134" fill="none" stroke="#3E7CC0" stroke-width="1.1"/><path d="M1735.2 125.8 l3.75 3.75 l3.75 -3.75" fill="none" stroke="#404040" stroke-width="1.3"/><path d="M1644.5 147.8 V162 L1648 158.7 L1651 164.8 L1653.2 163.8 L1650.2 157.6 L1655 157.2 Z" fill="#fff" stroke="#555" stroke-width="1" stroke-linejoin="round"/><path d="M1707.3 154.6 l3.6 3.6 l3.6 -3.6" fill="none" stroke="#404040" stroke-width="1.25"/><defs><filter id="bl1" x="-50%" y="-50%" width="200%" height="200%"><feGaussianBlur stdDeviation="0.7"/></filter></defs><circle cx="1801.8" cy="106.6" r="6.2" fill="#FF8F00" filter="url(#bl1)"/><path d="M1897.3 189 L1903.2 183.2 L1909.1 189" fill="none" stroke="#404040" stroke-width="1.2"/></svg>
<div class="a" style="left:290px;top:196px;width:1px;height:692px;background:#C8C8C8"></div>
<div class="a" style="left:267px;top:196px;width:19px;height:692px;background:#F0F0F0"></div>
<div class="a" style="left:267px;top:198px;width:19px;height:19px;background:#fff;border:1px solid #ABABAB"></div>
<div class="a" style="left:267px;top:217px;width:19px;height:474px;background:#fff;border:1px solid #ABABAB"></div>
<svg style="left:267px;top:198px" width="19" height="19" viewBox="0 0 19 19"><path d="M4.8 11 L9.5 6.2 L14.2 11 Z" fill="#222"/></svg>
<div class="a" style="left:41px;top:217px;width:204px;height:118px;border:3px solid #B7472A"></div>
<div class="a" style="left:44px;top:220px;width:198px;height:112px;background:#fff;overflow:hidden"><div class="a" style="left:0;top:0;width:1360px;height:765px;transform:scale(0.14485);transform-origin:0 0"><svg style="left:1003.2px;top:57.80000000000001px" width="34" height="34" viewBox="0 0 34 34"><rect x="0.2" y="0" width="31.5" height="23" rx="1.6" fill="#000"/><rect x="4.3" y="11.4" width="6.5" height="8.1" fill="#fff"/><rect x="12.8" y="7.2" width="6.4" height="12.3" fill="#fff"/><rect x="21.6" y="4.5" width="6.2" height="15" fill="#fff"/><path d="M11.8 22 L8.8 31.7 M15.8 22 L15.8 31.7 M19.8 22 L22.8 31.7" stroke="#000" stroke-width="1.9" stroke-linecap="round"/></svg>
<div class="t" style="left:1044.11px;top:60.57px;font-size:26.5px;color:#111111;transform:scaleX(0.9872);-webkit-text-stroke:0.75px #111">MagicSlides</div>
<div class="t" style="left:308.79px;top:308.24px;font-size:46.5px;color:#000000;font-weight:700;transform:scaleX(0.6634);letter-spacing:2.2px;-webkit-text-stroke:0.4px #000;text-shadow:1px 0 0 #000,-1px 0 0 #000">Professional Presentations in Seconds with AI</div>
<div class="t" style="left:179.47px;top:406.42px;font-size:34px;color:#000000;transform:scaleX(1.0048)">Never start from a blank slide again.</div>
<div class="a" style="left:181.5px;top:472.6px;width:8.5px;height:8.5px;border-radius:50%;background:#000"></div>
<div class="t" style="left:200.5px;top:459.42px;font-size:34px;color:#404040">Create presentation from text, YouTube, pdf</div>
<div class="a" style="left:181.5px;top:510px;width:8.5px;height:8.5px;border-radius:50%;background:#000"></div>
<div class="t" style="left:199.53px;top:496.82px;font-size:34px;color:#404040;transform:scaleX(0.9799)">No Credit Card Required</div>
<div class="a" style="left:181.5px;top:546px;width:8.5px;height:8.5px;border-radius:50%;background:#000"></div>
<div class="t" style="left:199.47px;top:532.82px;font-size:34px;color:#404040">No need to learn new tool</div></div></div>
<div class="t" style="left:14.86px;top:216.24px;font-size:18.5px;color:#B7472A;transform:scaleX(0.8201)">1</div>
<svg style="left:11px;top:237.3px" width="16" height="14" viewBox="0 0 16 14"><path d="M8.5 1.5 L10.2 5.6 L14.4 5.9 L11.2 8.6 L12.3 12.7 L8.5 10.4 L4.8 12.7 L5.8 8.6 L2.7 5.9 L6.8 5.6 Z" fill="#555"/><path d="M2 3.6 H4 M2 9.6 H4" stroke="#555" stroke-width="1.1"/></svg>
<div class="a" style="left:44px;top:357px;width:198px;height:112px;background:#fff;border:1px solid #C8C8C8;overflow:hidden"><div class="a" style="left:0;top:0;width:1360px;height:765px;transform:scale(0.14485);transform-origin:0 0"></div><svg style="left:64.2px;top:33px;overflow:hidden" width="67.6" height="44.8" viewBox="0 0 68 45"><defs><linearGradient id="dg" x1="0" y1="0" x2="0" y2="1"><stop offset="0" stop-color="#8F8B48"/><stop offset="0.25" stop-color="#A89050"/><stop offset="0.5" stop-color="#BA955E"/><stop offset="1" stop-color="#B68E58"/></linearGradient><filter id="db" x="-20%" y="-20%" width="140%" height="140%"><feGaussianBlur stdDeviation="1.2"/></filter><filter id="db2" x="-20%" y="-20%" width="140%" height="140%"><feGaussianBlur stdDeviation="0.4"/></filter><filter id="tx"><feTurbulence type="fractalNoise" baseFrequency="0.35 0.9" numOctaves="2" seed="3"/><feColorMatrix values="0 0 0 0 0.35  0 0 0 0 0.25  0 0 0 0 0.1  0 0 0 1.6 -0.75"/></filter></defs><rect width="68" height="45" fill="url(#dg)"/><rect width="68" height="45" filter="url(#tx)" opacity="0.55"/><g filter="url(#db)"><ellipse cx="63" cy="5" rx="8" ry="8" fill="#4E6A28" opacity="0.85"/><ellipse cx="46" cy="3" rx="11" ry="5" fill="#7A5A30" opacity="0.7"/><ellipse cx="26" cy="7" rx="20" ry="5" fill="#7E8C40" opacity="0.55"/><ellipse cx="58" cy="16" rx="9" ry="4" fill="#7E9448" opacity="0.5"/></g><g filter="url(#db2)"><path d="M9 23 Q13 20.5 21 20.8 Q31 21 35 23.5 Q37 27.5 34 31 Q27 33 19 32.5 Q11 32 9.5 28 Z" fill="#7A4A20"/><path d="M13 24 L16 23.5 M23 25 L26 24.5 M18 28 L21 27.5 M28 27 L31 26.5" stroke="#B07840" stroke-width="0.9"/><path d="M33 24.5 L38.5 17.5 L42 18 L39 24.5 L35 29.5 Z" fill="#5A3418"/><path d="M38.5 18.5 L41.5 17.5 L41.5 22 Z" fill="#D8C8A8"/><path d="M39.5 17.5 L37 11 L37.5 5 M41.5 17.5 L45.5 11 L46.5 5" fill="none" stroke="#6A4A28" stroke-width="0.8"/><path d="M12 30 L11 41 M16 31 L15.5 42 M30 31 L31 41 M27 31 L27.5 42" stroke="#5A3418" stroke-width="1.1"/></g></svg><div class="a" style="left:0;top:0;width:1360px;height:765px;transform:scale(0.14485);transform-origin:0 0"><svg style="left:1003.2px;top:57.80000000000001px" width="34" height="34" viewBox="0 0 34 34"><rect x="0.2" y="0" width="31.5" height="23" rx="1.6" fill="#000"/><rect x="4.3" y="11.4" width="6.5" height="8.1" fill="#fff"/><rect x="12.8" y="7.2" width="6.4" height="12.3" fill="#fff"/><rect x="21.6" y="4.5" width="6.2" height="15" fill="#fff"/><path d="M11.8 22 L8.8 31.7 M15.8 22 L15.8 31.7 M19.8 22 L22.8 31.7" stroke="#000" stroke-width="1.9" stroke-linecap="round"/></svg><div class="t" style="left:1044.11px;top:60.57px;font-size:26.5px;color:#111111;transform:scaleX(0.9872);-webkit-text-stroke:0.75px #111">MagicSlides</div></div></div>
<div class="t" style="left:15.1px;top:353.54px;font-size:18.5px;color:#444444;transform:scaleX(0.9742)">2</div>
<svg style="left:11px;top:374.3px" width="16" height="14" viewBox="0 0 16 14"><path d="M8.5 1.5 L10.2 5.6 L14.4 5.9 L11.2 8.6 L12.3 12.7 L8.5 10.4 L4.8 12.7 L5.8 8.6 L2.7 5.9 L6.8 5.6 Z" fill="#555"/><path d="M2 3.6 H4 M2 9.6 H4" stroke="#555" stroke-width="1.1"/></svg>
<div class="a" style="left:44px;top:494px;width:198px;height:112px;background:#fff;border:1px solid #C8C8C8;overflow:hidden"><div class="a" style="left:0;top:0;width:1360px;height:765px;transform:scale(0.14485);transform-origin:0 0"><svg style="left:1003.2px;top:57.80000000000001px" width="34" height="34" viewBox="0 0 34 34"><rect x="0.2" y="0" width="31.5" height="23" rx="1.6" fill="#000"/><rect x="4.3" y="11.4" width="6.5" height="8.1" fill="#fff"/><rect x="12.8" y="7.2" width="6.4" height="12.3" fill="#fff"/><rect x="21.6" y="4.5" width="6.2" height="15" fill="#fff"/><path d="M11.8 22 L8.8 31.7 M15.8 22 L15.8 31.7 M19.8 22 L22.8 31.7" stroke="#000" stroke-width="1.9" stroke-linecap="round"/></svg>
<div class="t" style="left:1044.11px;top:60.57px;font-size:26.5px;color:#111111;transform:scaleX(0.9872);-webkit-text-stroke:0.75px #111">MagicSlides</div>
<div class="t" style="left:308.79px;top:326.24px;font-size:46.5px;color:#000000;font-weight:700;transform:scaleX(0.6634);letter-spacing:2.2px;-webkit-text-stroke:0.4px #000;text-shadow:1px 0 0 #000,-1px 0 0 #000">Professional Presentations in Seconds with AI</div>
<div class="t" style="left:177.01px;top:393.99px;font-size:26px;color:#505050;transform:scaleX(1.1974)">Never start from a blank slide again.</div>
<div class="t" style="left:178.26px;top:436.49px;font-size:26px;color:#505050;transform:scaleX(1.1969)">• Create presentation from text, YouTube, pdf</div>
<div class="t" style="left:178.28px;top:463.49px;font-size:26px;color:#505050;transform:scaleX(1.1747)">• No Credit Card Required</div>
<div class="t" style="left:178.25px;top:490.99px;font-size:26px;color:#505050;transform:scaleX(1.2040)">• No need to learn new tool</div>
<div class="t" style="left:176.69px;top:518.49px;font-size:26px;color:#505050;transform:scaleX(1.2009)">It is the second one line of bullet.</div>
<div class="t" style="left:229.93px;top:538.49px;font-size:26px;color:#505050;transform:scaleX(1.0287)">•This is the sub bullet here.</div>
<div class="t" style="left:229.93px;top:565.99px;font-size:26px;color:#505050;transform:scaleX(1.0310)">•Example second line of bullet.</div></div></div>
<div class="t" style="left:15.36px;top:490.44px;font-size:18.5px;color:#444444;transform:scaleX(0.8649)">3</div>
<div class="a" style="left:44px;top:631px;width:198px;height:112px;background:#fff;border:1px solid #C8C8C8;overflow:hidden"><div class="a" style="left:0;top:0;width:1360px;height:765px;transform:scale(0.14485);transform-origin:0 0"><svg style="left:1003.2px;top:57.80000000000001px" width="34" height="34" viewBox="0 0 34 34"><rect x="0.2" y="0" width="31.5" height="23" rx="1.6" fill="#000"/><rect x="4.3" y="11.4" width="6.5" height="8.1" fill="#fff"/><rect x="12.8" y="7.2" width="6.4" height="12.3" fill="#fff"/><rect x="21.6" y="4.5" width="6.2" height="15" fill="#fff"/><path d="M11.8 22 L8.8 31.7 M15.8 22 L15.8 31.7 M19.8 22 L22.8 31.7" stroke="#000" stroke-width="1.9" stroke-linecap="round"/></svg>
<div class="t" style="left:1044.11px;top:60.57px;font-size:26.5px;color:#111111;transform:scaleX(0.9872);-webkit-text-stroke:0.75px #111">MagicSlides</div>
<div class="t" style="left:308.79px;top:326.24px;font-size:46.5px;color:#000000;font-weight:700;transform:scaleX(0.6634);letter-spacing:2.2px;-webkit-text-stroke:0.4px #000;text-shadow:1px 0 0 #000,-1px 0 0 #000">Professional Presentations in Seconds with AI</div>
<div class="t" style="left:179.47px;top:389.92px;font-size:34px;color:#000000;transform:scaleX(1.0048)">Never start from a blank slide again.</div>
<div class="a" style="left:181.5px;top:456.1px;width:8.5px;height:8.5px;border-radius:50%;background:#000"></div>
<div class="t" style="left:200.5px;top:442.92px;font-size:34px;color:#404040">Create presentation from text, YouTube, pdf</div>
<div class="a" style="left:181.5px;top:493.5px;width:8.5px;height:8.5px;border-radius:50%;background:#000"></div>
<div class="t" style="left:199.53px;top:480.32px;font-size:34px;color:#404040;transform:scaleX(0.9799)">No Credit Card Required</div>
<div class="a" style="left:181.5px;top:529.5px;width:8.5px;height:8.5px;border-radius:50%;background:#000"></div>
<div class="t" style="left:199.46px;top:516.32px;font-size:34px;color:#404040;transform:scaleX(1.0081)">No need to learn</div>
<div class="t" style="left:459.26px;top:516.32px;font-size:34px;color:#0563C1;transform:scaleX(1.0145);text-decoration:underline">new tool</div></div></div>
<div class="t" style="left:15.66px;top:627.34px;font-size:18.5px;color:#444444;transform:scaleX(0.9205)">4</div>
<div class="a" style="left:44px;top:768px;width:198px;height:112px;background:#fff;border:1px solid #C8C8C8;overflow:hidden"><div class="a" style="left:0;top:0;width:1360px;height:765px;transform:scale(0.14485);transform-origin:0 0"></div><svg style="left:60px;top:34px;overflow:hidden" width="73" height="49" viewBox="0 0 73 49"><defs><linearGradient id="gg" x1="0" y1="0" x2="0" y2="1"><stop offset="0" stop-color="#9A9A9A"/><stop offset="0.3" stop-color="#C4C4C4"/><stop offset="0.6" stop-color="#D4D4D4"/><stop offset="1" stop-color="#D0D0D0"/></linearGradient><filter id="gb" x="-20%" y="-20%" width="140%" height="140%"><feGaussianBlur stdDeviation="1.2"/></filter><filter id="gb2" x="-20%" y="-20%" width="140%" height="140%"><feGaussianBlur stdDeviation="0.4"/></filter><filter id="tx2"><feTurbulence type="fractalNoise" baseFrequency="0.4 0.9" numOctaves="2" seed="7"/><feColorMatrix values="0 0 0 0 0.2  0 0 0 0 0.2  0 0 0 0 0.2  0 0 0 1.8 -0.8"/></filter></defs><rect width="73" height="49" fill="url(#gg)"/><rect width="73" height="49" filter="url(#tx2)" opacity="0.6"/><g filter="url(#gb)"><ellipse cx="66" cy="6" rx="9" ry="8" fill="#555" opacity="0.75"/><ellipse cx="40" cy="3" rx="20" ry="4" fill="#808080" opacity="0.6"/></g><g filter="url(#gb2)"><path d="M12 27 Q18 23.5 28 24 Q36 25 38 29 Q37 34 31 36 Q20 37 14 35 Q10 32 12 27 Z" fill="#3C3C3C"/><path d="M15 28 L18 27.5 M22 31 L25 30.5 M30 28 L33 28" stroke="#8A8A8A" stroke-width="0.9"/><path d="M15 35 L13 46 M19 36 L19 47 M32 36 L33 46" stroke="#3A3A3A" stroke-width="1.2"/></g><rect x="26" y="4.8" width="25" height="22.2" fill="#B38A48"/><g filter="url(#gb2)"><rect x="26" y="4.8" width="25" height="9" fill="#8E8A40" opacity="0.55"/><path d="M34 15 L31 7 M44 15 L47 6.5 M35 16 L39 19 L43 16" fill="none" stroke="#6A4A2A" stroke-width="1"/><path d="M37 18 L41 18 L40.5 25 L38 25 Z" fill="#E0C8A0"/><path d="M26 24 H40 V27 H26 Z" fill="#8A4A1A"/></g></svg><div class="a" style="left:0;top:0;width:1360px;height:765px;transform:scale(0.14485);transform-origin:0 0"><svg style="left:1003.2px;top:57.80000000000001px" width="34" height="34" viewBox="0 0 34 34"><rect x="0.2" y="0" width="31.5" height="23" rx="1.6" fill="#000"/><rect x="4.3" y="11.4" width="6.5" height="8.1" fill="#fff"/><rect x="12.8" y="7.2" width="6.4" height="12.3" fill="#fff"/><rect x="21.6" y="4.5" width="6.2" height="15" fill="#fff"/><path d="M11.8 22 L8.8 31.7 M15.8 22 L15.8 31.7 M19.8 22 L22.8 31.7" stroke="#000" stroke-width="1.9" stroke-linecap="round"/></svg><div class="t" style="left:1044.11px;top:60.57px;font-size:26.5px;color:#111111;transform:scaleX(0.9872);-webkit-text-stroke:0.75px #111">MagicSlides</div></div></div>
<div class="t" style="left:15.34px;top:764.14px;font-size:18.5px;color:#444444;transform:scaleX(0.8876)">5</div>
<div class="a" style="left:415px;top:208px;width:1362px;height:700px;background:#fff;border:1px solid #C8C8C8;overflow:hidden"><div class="a" style="left:0;top:0;width:1360px;height:765px"><svg style="left:1003.2px;top:57.80000000000001px" width="34" height="34" viewBox="0 0 34 34"><rect x="0.2" y="0" width="31.5" height="23" rx="1.6" fill="#000"/><rect x="4.3" y="11.4" width="6.5" height="8.1" fill="#fff"/><rect x="12.8" y="7.2" width="6.4" height="12.3" fill="#fff"/><rect x="21.6" y="4.5" width="6.2" height="15" fill="#fff"/><path d="M11.8 22 L8.8 31.7 M15.8 22 L15.8 31.7 M19.8 22 L22.8 31.7" stroke="#000" stroke-width="1.9" stroke-linecap="round"/></svg>
<div class="t" style="left:1044.11px;top:60.57px;font-size:26.5px;color:#111111;transform:scaleX(0.9872);-webkit-text-stroke:0.75px #111">MagicSlides</div>
<div class="t" style="left:308.79px;top:308.24px;font-size:46.5px;color:#000000;font-weight:700;transform:scaleX(0.6634);letter-spacing:2.2px;-webkit-text-stroke:0.4px #000;text-shadow:1px 0 0 #000,-1px 0 0 #000">Professional Presentations in Seconds with AI</div>
<div class="a" style="left:200px;top:444px;width:703px;height:53px;background:#BBBBBB"></div>
<div class="a" style="left:192px;top:497px;width:382px;height:37px;background:#BBBBBB"></div>
<div class="a" style="left:192px;top:534px;width:404px;height:36.6px;background:#BBBBBB"></div>
<div class="t" style="left:179.47px;top:406.42px;font-size:34px;color:#000000;transform:scaleX(1.0048)">Never start from a blank slide again.</div>
<div class="a" style="left:181.5px;top:472.6px;width:8.5px;height:8.5px;border-radius:50%;background:#000"></div>
<div class="t" style="left:200.5px;top:459.42px;font-size:34px;color:#404040">Create presentation from text, YouTube, pdf</div>
<div class="a" style="left:181.5px;top:510px;width:8.5px;height:8.5px;border-radius:50%;background:#000"></div>
<div class="t" style="left:199.53px;top:496.82px;font-size:34px;color:#404040;transform:scaleX(0.9799)">No Credit Card Required</div>
<div class="a" style="left:181.5px;top:546px;width:8.5px;height:8.5px;border-radius:50%;background:#000"></div>
<div class="t" style="left:199.47px;top:532.82px;font-size:34px;color:#404040">No need to learn new tool</div></div></div>
<svg style="left:0;top:0" width="1919" height="888" viewBox="0 0 1919 888"><rect x="585.5" y="610.5" width="1021.5" height="185" fill="none" stroke="#555" stroke-width="1" stroke-dasharray="2 1"/><line x1="1096" y1="580" x2="1096" y2="605" stroke="#666" stroke-width="1.3"/><circle cx="586" cy="610.8" r="5.7" fill="#fff" stroke="#666" stroke-width="2.3"/><circle cx="1096" cy="610.8" r="5.7" fill="#fff" stroke="#666" stroke-width="2.3"/><circle cx="1607" cy="610.8" r="5.7" fill="#fff" stroke="#666" stroke-width="2.3"/><circle cx="586" cy="703" r="5.7" fill="#fff" stroke="#666" stroke-width="2.3"/><circle cx="1607" cy="703" r="5.7" fill="#fff" stroke="#666" stroke-width="2.3"/><circle cx="586" cy="795.5" r="5.7" fill="#fff" stroke="#666" stroke-width="2.3"/><circle cx="1096" cy="795.5" r="5.7" fill="#fff" stroke="#666" stroke-width="2.3"/><circle cx="1607" cy="795.5" r="5.7" fill="#fff" stroke="#666" stroke-width="2.3"/><g stroke="#666" stroke-width="3.8" stroke-linejoin="miter"><path d="M1101.83 577.73 A11.0 11.0 0 1 1 1107.00 568.40 L1102.40 568.40 A6.4 6.4 0 1 0 1099.39 573.83 Z" fill="#666"/><path d="M1100 566.8 L1114.2 566.8 L1106.3 574.8 Z" fill="#666"/></g><path d="M1101.83 577.73 A11.0 11.0 0 1 1 1107.00 568.40 L1102.40 568.40 A6.4 6.4 0 1 0 1099.39 573.83 Z" fill="#fff"/><path d="M1100 566.8 L1114.2 566.8 L1106.3 574.8 Z" fill="#fff"/></svg>
<div class="a" style="left:1899px;top:196px;width:20px;height:692px;background:#F0F0F0"></div>
<div class="a" style="left:1899.5px;top:198px;width:19px;height:19px;background:#fff;border:1px solid #ABABAB"></div>
<div class="a" style="left:1899.5px;top:217px;width:19px;height:76px;background:#fff;border:1px solid #ABABAB"></div>
<svg style="left:1899px;top:198px" width="20" height="19" viewBox="0 0 20 19"><path d="M5.5 11 L10.5 6 L15.5 11 Z" fill="#222"/></svg>
<svg style="left:0;top:0" width="1919" height="888" viewBox="0 0 1919 888"><defs><filter id="sh" x="-10%" y="-10%" width="120%" height="120%"><feDropShadow dx="0.9" dy="0.9" stdDeviation="0.55" flood-color="#000" flood-opacity="0.55"/></filter></defs><rect x="744.8" y="81.2" width="427.2" height="116.6" rx="5" fill="none" stroke="#E23A3A" stroke-width="6.6" filter="url(#sh)"/><g filter="url(#sh)" stroke="#E23A3A" stroke-width="6.2" stroke-linecap="round" stroke-linejoin="round" fill="none"><path d="M316 561.7 L733 210"/><path d="M715.5 211 L733.6 209.4 L729.3 225.5"/></g></svg>
</body></html>
